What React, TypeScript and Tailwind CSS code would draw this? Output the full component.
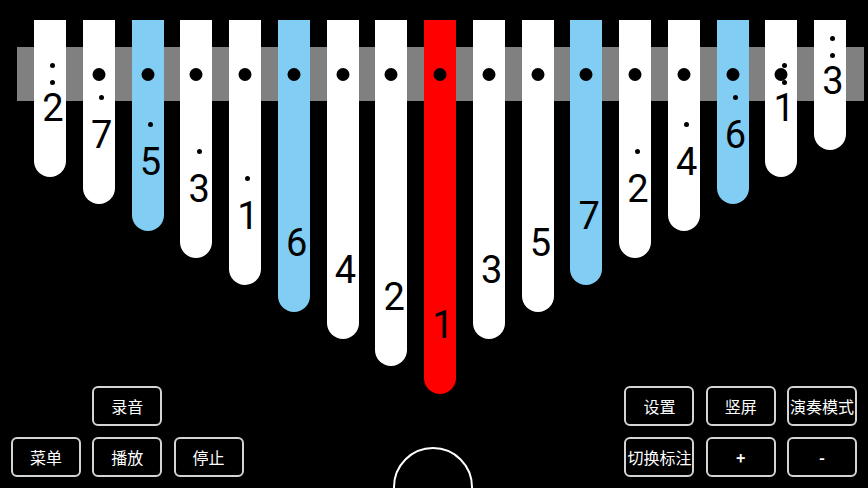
import React from "react";

type Key = { n: string; dots: number; color: string; level: number; big: boolean };

const W = "#ffffff";
const B = "#82cdf3";
const R = "#ff0000";

const keys: Key[] = [
  { n: "2", dots: 2, color: W, level: 0, big: false },
  { n: "7", dots: 1, color: W, level: 1, big: true },
  { n: "5", dots: 1, color: B, level: 2, big: true },
  { n: "3", dots: 1, color: W, level: 3, big: true },
  { n: "1", dots: 1, color: W, level: 4, big: true },
  { n: "6", dots: 0, color: B, level: 5, big: true },
  { n: "4", dots: 0, color: W, level: 6, big: true },
  { n: "2", dots: 0, color: W, level: 7, big: true },
  { n: "1", dots: 0, color: R, level: 8, big: true },
  { n: "3", dots: 0, color: W, level: 6, big: true },
  { n: "5", dots: 0, color: W, level: 5, big: true },
  { n: "7", dots: 0, color: B, level: 4, big: true },
  { n: "2", dots: 1, color: W, level: 3, big: true },
  { n: "4", dots: 1, color: W, level: 2, big: true },
  { n: "6", dots: 1, color: B, level: 1, big: true },
  { n: "1", dots: 2, color: W, level: 0, big: true },
  { n: "3", dots: 2, color: W, level: -1, big: false },
];

function Dot() {
  return <div className="w-[5px] h-[5px] rounded-full bg-black" />;
}

function KeyBar({ k }: { k: Key }) {
  const h = 156.7 + 27.1 * k.level;
  return (
    <div
      className="relative w-[32px] shrink-0 rounded-b-full flex flex-col items-center justify-end pb-[50px]"
      style={{ height: h, backgroundColor: k.color }}
    >
      {k.big && (
        <div className="absolute top-[48px] left-1/2 -translate-x-1/2 w-[13px] h-[13px] rounded-full bg-black" />
      )}
      <div className="relative flex flex-col items-center translate-x-[3px]">
        {k.dots === 1 && (
          <div className="mb-[16px]">
            <Dot />
          </div>
        )}
        {k.dots === 2 && (
          <div className="flex flex-col items-center gap-[12px] mb-[4px]">
            <Dot />
            <Dot />
          </div>
        )}
        <div className="text-[38px] leading-none text-black font-['Roboto',sans-serif]">{k.n}</div>
      </div>
    </div>
  );
}

function Btn({ children, bold }: { children: React.ReactNode; bold?: boolean }) {
  return (
    <div
      className={
        "w-[70px] h-[40px] rounded-[6px] border-2 border-[#d4d4d4] flex items-center justify-center text-white text-[16px] font-['Noto_Sans_CJK_SC',sans-serif] whitespace-nowrap " +
        (bold ? "font-bold" : "")
      }
    >
      {children}
    </div>
  );
}

export default function App() {
  return (
    <div className="relative w-[868px] h-[488px] bg-black overflow-hidden">
      <div className="absolute left-[17px] top-[47px] w-[847px] h-[54px] bg-[#808080]" />
      <div className="relative z-10 flex items-start gap-[16.75px] pl-[34px] pt-[20px]">
        {keys.map((k, i) => (
          <KeyBar key={i} k={k} />
        ))}
      </div>

      <div className="absolute z-20 left-[11px] bottom-[11px] grid grid-cols-[70px_70px_70px] gap-x-[11.3px] gap-y-[11.5px]">
        <div />
        <Btn>录音</Btn>
        <div />
        <Btn>菜单</Btn>
        <Btn>播放</Btn>
        <Btn>停止</Btn>
      </div>

      <div className="absolute z-20 right-[11px] bottom-[11px] grid grid-cols-[70px_70px_70px] gap-x-[11.3px] gap-y-[11.5px]">
        <Btn>设置</Btn>
        <Btn>竖屏</Btn>
        <Btn>演奏模式</Btn>
        <Btn>切换标注</Btn>
        <Btn bold>+</Btn>
        <Btn bold>-</Btn>
      </div>

      <div className="absolute z-20 left-[393px] top-[447px] w-[80px] h-[80px] rounded-full border-2 border-white" />
    </div>
  );
}
